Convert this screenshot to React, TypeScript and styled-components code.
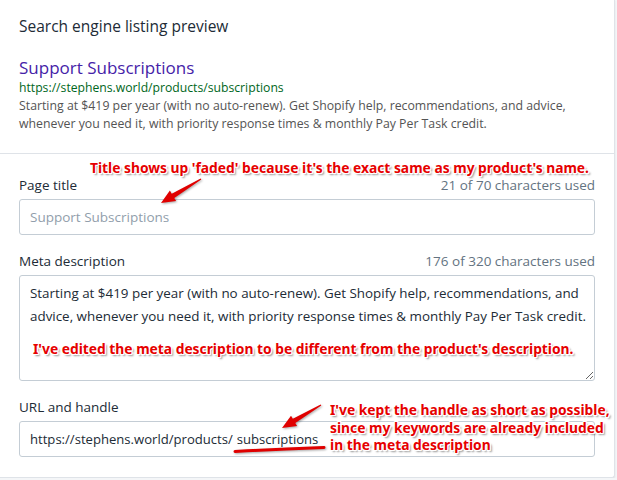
import React from "react";
import styled, { createGlobalStyle } from "styled-components";

const GlobalStyle = createGlobalStyle`
  html, body {
    margin: 0;
    padding: 0;
    background: #f4f6f8;
  }
  body {
    font-family: "Open Sans", "Liberation Sans", sans-serif;
    color: #212b36;
  }
`;

const META =
  "Starting at $419 per year (with no auto-renew). Get Shopify help, recommendations, and\nadvice, whenever you need it, with priority response times & monthly Pay Per Task credit.";

function SeoCard() {
  return (
    <CardStyled>
      <PreviewSection>
        <Heading>Search engine listing preview</Heading>
        <PreviewTitle>Support Subscriptions</PreviewTitle>
        <PreviewUrl>https://stephens.world/products/subscriptions</PreviewUrl>
        <PreviewDesc>
          Starting at $419 per year (with no auto-renew). Get Shopify help, recommendations, and advice,
          <br />
          whenever you need it, with priority response times &amp; monthly Pay Per Task credit.
        </PreviewDesc>
      </PreviewSection>

      <FieldsSection>
        <Field>
          <LabelRow>
            <label htmlFor="title">Page title</label>
            <Count>21 of 70 characters used</Count>
          </LabelRow>
          <TextInput id="title" placeholder="Support Subscriptions" readOnly />
        </Field>

        <Field>
          <LabelRow>
            <label htmlFor="meta">Meta description</label>
            <Count>176 of 320 characters used</Count>
          </LabelRow>
          <TextArea id="meta" readOnly wrap="off" value={META} />
        </Field>

        <Field>
          <LabelRow>
            <label htmlFor="handle">URL and handle</label>
          </LabelRow>
          <PrefixInput>
            <span>https://stephens.world/products/</span>
            <input id="handle" value="subscriptions" readOnly />
          </PrefixInput>
        </Field>
      </FieldsSection>

      {/* annotations drawn on top of the screenshot */}
      <Markup viewBox="0 0 615 477" width="615" height="477">
        <polygon
          fill="#e00000"
          points="201.3,179.4 174.3,198 176.1,201 161,203 169.9,190.6 171.7,193.7 200.7,178.6"
        />
        <polygon
          fill="#e00000"
          points="321.3,405.4 295.3,423 297.1,426.1 282,428 291,415.7 292.8,418.7 320.7,404.6"
        />
        <path d="M235 451.5 Q280 449 324 447.5" stroke="#e00000" strokeWidth="3" strokeLinecap="round" fill="none" />
      </Markup>

      <Note $top={159} $left={90}>
        Title shows up 'faded' because it's the exact same as my product's name.
      </Note>
      <Note $top={340} $left={33}>
        I've edited the meta description to be different from the product's description.
      </Note>
      <Note $top={401} $left={330}>
        I've kept the handle as short as possible,
        <br />
        since my keywords are already included
        <br />
        in the meta description
      </Note>
    </CardStyled>
  );
}

export default function App() {
  return (
    <>
      <GlobalStyle />
      <SeoCard />
    </>
  );
}

const CardStyled = styled.div`
  position: relative;
  width: 614px;
  background: #fff;
  border-right: 1px solid #dfe3e8;
  border-bottom: 1px solid #dfe3e8;
  border-bottom-right-radius: 3px;
  box-shadow: 0 1px 2px rgba(63, 63, 68, 0.12);
`;

const PreviewSection = styled.div`
  padding: 16px 19px 20px;
  border-bottom: 1px solid #dfe3e8;
`;

const Heading = styled.h2`
  margin: 0 0 21px;
  font-size: 15.5px;
  line-height: 20px;
  font-weight: 400;
  color: #212b36;
`;

const PreviewTitle = styled.div`
  font-size: 17px;
  line-height: 22px;
  color: #4522a8;
`;

const PreviewUrl = styled.div`
  font-size: 12.2px;
  line-height: 18px;
  color: #006621;
`;

const PreviewDesc = styled.div`
  font-size: 12.3px;
  line-height: 18px;
  color: #545454;
  white-space: nowrap;
`;

const FieldsSection = styled.div`
  display: flex;
  flex-direction: column;
  gap: 16px;
  padding: 21px 19px 20px;
`;

const Field = styled.div`
  display: flex;
  flex-direction: column;
  gap: 4px;
`;

const LabelRow = styled.div`
  display: flex;
  justify-content: space-between;
  align-items: center;
  font-size: 13.5px;
  line-height: 20px;
  color: #212b36;
`;

const Count = styled.span`
  color: #637381;
`;

const TextInput = styled.input`
  box-sizing: border-box;
  width: 100%;
  height: 36px;
  padding: 0 10px;
  border: 1px solid #c4cdd5;
  border-radius: 3px;
  font-family: inherit;
  font-size: 13.5px;
  color: #212b36;
  outline: none;

  &::placeholder {
    color: #919eab;
  }
`;

const TextArea = styled.textarea`
  box-sizing: border-box;
  width: 100%;
  height: 106px;
  padding: 6px 10px;
  border: 1px solid #c4cdd5;
  border-radius: 3px;
  font-family: inherit;
  font-size: 13.4px;
  line-height: 23px;
  color: #212b36;
  white-space: pre;
  resize: vertical;
  outline: none;
  overflow: hidden;
`;

const PrefixInput = styled.div`
  display: flex;
  align-items: center;
  box-sizing: border-box;
  height: 36px;
  padding: 0 10px;
  border: 1px solid #c4cdd5;
  border-radius: 3px;
  font-size: 13.1px;
  color: #212b36;

  span {
    white-space: pre;
    margin-right: 4px;
  }

  input {
    flex: 1;
    border: none;
    outline: none;
    padding: 0;
    font-family: inherit;
    font-size: 13.1px;
    color: #212b36;
    background: transparent;
  }
`;

const Markup = styled.svg`
  position: absolute;
  left: 0;
  top: 0;
  pointer-events: none;
  filter: drop-shadow(1px 1px 1px rgba(0, 0, 0, 0.35));
`;

const Note = styled.div<{ $top: number; $left: number }>`
  position: absolute;
  top: ${(p) => p.$top}px;
  left: ${(p) => p.$left}px;
  font-family: "Noto Sans", "Open Sans", sans-serif;
  font-weight: 700;
  font-size: 13.8px;
  line-height: 17.5px;
  color: #e60000;
  white-space: nowrap;
  text-shadow: -1px -1px 0 #fff, 1px -1px 0 #fff, -1px 1px 0 #fff, 1px 1px 0 #fff,
    0 1px 0 #fff, 1px 0 0 #fff, 0 -1px 0 #fff, -1px 0 0 #fff, 2px 2px 2px rgba(0, 0, 0, 0.45);
`;
